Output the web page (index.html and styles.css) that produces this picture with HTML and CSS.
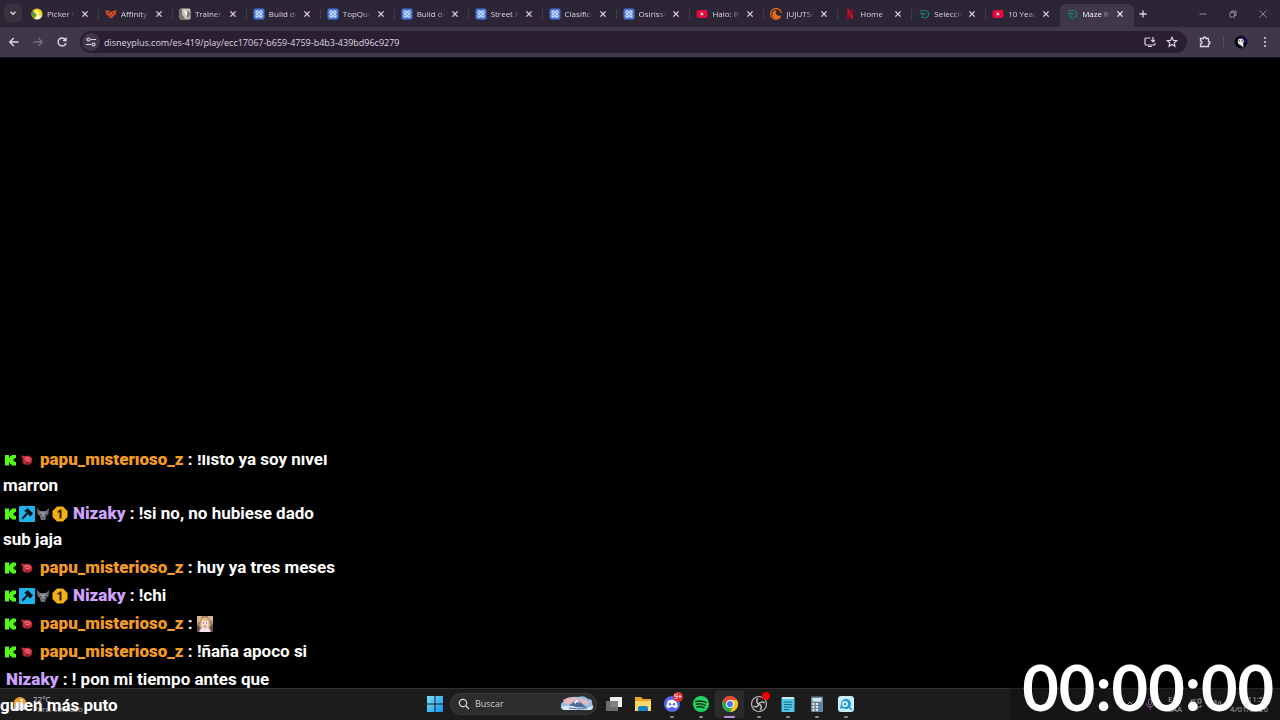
FILE: index.html
```html
<!DOCTYPE html>
<html lang="es">
<head>
  <meta charset="UTF-8">
  <meta name="viewport" content="width=device-width, initial-scale=1.0">
  <title>Maze Runner</title>
  <link rel="stylesheet" href="styles.css">
</head>
<body>
  <!-- shared icons -->
  <svg class="sprite" aria-hidden="true">
    <symbol id="close" viewBox="0 0 12 12"><path d="M3.4 3.4l5.2 5.2M8.600 3.400L3.400 8.600" fill="none" stroke="currentColor" stroke-width="1.3"/></symbol>
    <symbol id="build" viewBox="0 0 12 12"><rect x=".5" y=".5" width="11" height="11" rx="2" fill="#4a76dc"/><g fill="none" stroke="#cfe2ff" stroke-width="1.1"><circle cx="4.2" cy="4.2" r="1.3"/><circle cx="7.8" cy="4.2" r="1.3"/><circle cx="4.2" cy="7.8" r="1.3"/><circle cx="7.8" cy="7.8" r="1.3"/></g></symbol>
    <symbol id="youtube" viewBox="0 0 12 12"><rect x=".5" y="2" width="11" height="8" rx="2" fill="#e8083e"/><path d="M4.8 4.2L8 6 4.8 7.8z" fill="#fff"/></symbol>
    <symbol id="disney" viewBox="0 0 12 12"><path d="M2 3.2c4-2.2 9-.2 8.800 3.300C10.600 9.500 6.500 10.600 3.200 9M1.500 6c2-1 5-.8 6.500.8M4.500 4.500v5" fill="none" stroke="#1d7a78" stroke-width="1.200"/></symbol>
    <symbol id="kick" viewBox="0 0 14 14"><path d="M2 1.500h4v3h1V3h1.500V1.500H13V5h-1.500v1.500H10v1h1.500V9H13v3.500H8.500V11H7V9.500H6v3H2z" fill="#53fc18"/></symbol>
    <symbol id="hammer" viewBox="0 0 16 16"><rect width="16" height="16" rx="1" fill="#1cb4ee"/><path d="M5 5l4-3 1 1.500L12.500 6 14 7l-2.500 3.500L10 9.500 9 8l-5 5.500L2.500 12l5-5.500L6.500 5.500z" fill="#08131b"/></symbol>
    <symbol id="wolf" viewBox="0 0 14 14"><path d="M1 1l3 3h6l3-3-.5 6-2 1.500L9 13H5L3.500 8.500l-2-1.500z" fill="#68717d"/><path d="M4 4l3 2 3-2-1 4-2 4-2-4z" fill="#9a9ba4"/><path d="M4 7l2 .5L5 8.500zM10 7l-2 .5 1 1z" fill="#191417"/><path d="M6 9.500h2l-1 2z" fill="#5a2d30"/></symbol>
    <symbol id="first" viewBox="0 0 16 16"><path d="M5 .5h6L15.500 5v6L11 15.500H5L.5 11V5z" fill="#f3ae18"/><path d="M5.500 5.500L8 3.500h1.500v9h-2V6l-2 1z" fill="#33200a"/></symbol>
    <symbol id="meat" viewBox="0 0 14 14"><path d="M1 2.500l4 .5c4-1 7.500 1 7.300 4.500-.2 3.500-3.800 5-6.800 4C2.500 11 2 8.500 3 6.500z" fill="#c72c3b"/><path d="M4.500 6c2-2 5-1 6 .5M6 7.500c1.500-.8 3 0 3.500 1" fill="none" stroke="#f0a1a5" stroke-width="1"/><path d="M5.500 10h4" stroke="#691622"/></symbol>
  </svg>

  <header class="browser">
    <div class="tabbar">
      <button class="tab-search" aria-label="Buscar pestañas"><svg viewBox="0 0 12 12"><path d="M3.500 4.800L6 7.300l2.500-2.500" fill="none" stroke="currentColor" stroke-width="1.400"/></svg></button>
      <nav class="tabs">
        <div class="tab"><svg viewBox="0 0 12 12"><circle cx="6" cy="6" r="5.500" fill="#edd51c"/><path d="M6 6L1.500 2.500A5.500 5.500 0 0 0 3 10.700z" fill="#5c9a36"/><path d="M6 6l5 2A5.500 5.500 0 0 1 4 11z" fill="#f2efc2"/><path d="M3 4l3-2 3 3-3 2z" fill="#fff28c"/></svg><a href="#">Picker Wheel</a><button aria-label="Cerrar"><svg><use href="#close"/></svg></button></div>
        <div class="tab"><svg viewBox="0 0 12 12"><path d="M.5 2l3 .7L6 4l2.500-1.300 3-.7-.8 4.500L8.500 8 7.500 10h-3l-1-2-2.200-1.500z" fill="#d14e20"/><path d="M3 4.500l2 1.300M9 4.500L7 5.800M5 8.500l1-1 1 1" stroke="#562018" fill="none"/></svg><a href="#">Affinity</a><button aria-label="Cerrar"><svg><use href="#close"/></svg></button></div>
        <div class="tab"><svg viewBox="0 0 12 12"><rect x=".5" y=".5" width="11" height="11" rx="1.500" fill="#c9c6bc"/><path d="M1 1h2v5l3 5H1zM9 2l2 4-2 5-1-4z" fill="#77716b"/><path d="M5 2l3 2v4L6 6z" fill="#f5f2e9"/></svg><a href="#">Trainer</a><button aria-label="Cerrar"><svg><use href="#close"/></svg></button></div>
        <div class="tab"><svg><use href="#build"/></svg><a href="#">Build de</a><button aria-label="Cerrar"><svg><use href="#close"/></svg></button></div>
        <div class="tab"><svg><use href="#build"/></svg><a href="#">TopQues</a><button aria-label="Cerrar"><svg><use href="#close"/></svg></button></div>
        <div class="tab"><svg><use href="#build"/></svg><a href="#">Build de</a><button aria-label="Cerrar"><svg><use href="#close"/></svg></button></div>
        <div class="tab"><svg><use href="#build"/></svg><a href="#">Street F</a><button aria-label="Cerrar"><svg><use href="#close"/></svg></button></div>
        <div class="tab"><svg><use href="#build"/></svg><a href="#">Clasificac</a><button aria-label="Cerrar"><svg><use href="#close"/></svg></button></div>
        <div class="tab"><svg><use href="#build"/></svg><a href="#">Osiriss#</a><button aria-label="Cerrar"><svg><use href="#close"/></svg></button></div>
        <div class="tab"><svg><use href="#youtube"/></svg><a href="#">Halo: Re</a><button aria-label="Cerrar"><svg><use href="#close"/></svg></button></div>
        <div class="tab"><svg viewBox="0 0 12 12"><path d="M10.800 8.500A5.400 5.400 0 1 1 11.400 5" fill="none" stroke="#f16a18" stroke-width="1.200"/><path d="M10.800 7A4.300 4.300 0 1 1 7 2.200 2.200 2.200 0 1 0 10.800 7z" fill="#f16a18"/></svg><a href="#">JUJUTSU</a><button aria-label="Cerrar"><svg><use href="#close"/></svg></button></div>
        <div class="tab"><svg viewBox="0 0 12 12"><path d="M3 1h2v10H3zM7 1h2v10H7z" fill="#9b0b20"/><path d="M3 1h2l4 10H7z" fill="#d30d26"/></svg><a href="#">Home</a><button aria-label="Cerrar"><svg><use href="#close"/></svg></button></div>
        <div class="tab"><svg><use href="#disney"/></svg><a href="#">Seleccio</a><button aria-label="Cerrar"><svg><use href="#close"/></svg></button></div>
        <div class="tab"><svg><use href="#youtube"/></svg><a href="#">10 Years</a><button aria-label="Cerrar"><svg><use href="#close"/></svg></button></div>
        <div class="tab active"><svg><use href="#disney"/></svg><a href="#">Maze Ru</a><button aria-label="Cerrar"><svg><use href="#close"/></svg></button></div>
      </nav>
      <button class="new-tab" aria-label="Nueva pestaña"><svg viewBox="0 0 12 12"><path d="M6 2.500v7M2.500 6h7" stroke="currentColor" stroke-width="1.300"/></svg></button>
      <div class="window-buttons">
        <button aria-label="Minimizar"><svg viewBox="0 0 12 12"><path d="M2.500 6h7" stroke="currentColor"/></svg></button>
        <button aria-label="Restaurar"><svg viewBox="0 0 12 12"><path d="M3 4.500h4.500V9H3zM4.500 4.500V3H9v4.500H7.500" fill="none" stroke="currentColor"/></svg></button>
        <button aria-label="Cerrar ventana"><svg viewBox="0 0 12 12"><path d="M2.500 2.500l7 7M9.500 2.500l-7 7" stroke="currentColor"/></svg></button>
      </div>
    </div>
    <div class="toolbar">
      <button aria-label="Atrás"><svg viewBox="0 0 12 12"><path d="M10.500 6H2M5.800 2L1.800 6l4 4" fill="none" stroke="currentColor" stroke-width="1.300"/></svg></button>
      <button aria-label="Adelante" disabled><svg viewBox="0 0 12 12"><path d="M1.500 6H10M6.200 2l4 4-4 4" fill="none" stroke="currentColor" stroke-width="1.300"/></svg></button>
      <button aria-label="Recargar"><svg viewBox="0 0 12 12"><path d="M9.500 3.800A4 4 0 1 0 10 7M10 1.500v3H7" fill="none" stroke="currentColor" stroke-width="1.400"/></svg></button>
      <div class="address">
        <button class="site-info" aria-label="Información del sitio"><svg viewBox="0 0 12 12"><g fill="none" stroke="currentColor" stroke-width="1.200"><circle cx="3.500" cy="3.500" r="1.500"/><circle cx="8.500" cy="8.500" r="1.500"/><path d="M6 3.500h5M1 8.500h5"/></g></svg></button>
        <input type="text" aria-label="Dirección" value="disneyplus.com/es-419/play/ecc17067-b659-4759-b4b3-439bd96c9279">
        <button aria-label="Instalar"><svg viewBox="0 0 12 12"><path d="M6.500 2H2Q1 2 1 3v5q0 1 1 1h8q1 0 1-1V7M4 10.500h4M9 1v4.500M7.200 4L9 5.800 10.800 4" fill="none" stroke="currentColor" stroke-width="1.200"/></svg></button>
        <button aria-label="Favorito"><svg viewBox="0 0 12 12"><path d="M6 1.300l1.400 3.100 3.400.3-2.600 2.200.8 3.400-3-1.800-3 1.800.8-3.400-2.600-2.200 3.400-.3z" fill="none" stroke="currentColor" stroke-width="1.100"/></svg></button>
      </div>
      <button class="extensions" aria-label="Extensiones"><svg viewBox="0 0 12 12"><path d="M1.500 2.500h3q0-1.500 1.200-1.500T7 2.500h2.500v3Q11 5.500 11 6.700T9.500 8v2.500h-8V8Q3 8 3 6.500T1.500 5z" fill="none" stroke="currentColor" stroke-width="1.300"/></svg></button>
      <button class="profile" aria-label="Perfil"><svg viewBox="0 0 14 14"><circle cx="7" cy="7" r="6.500" fill="#080719"/><path d="M8 1.500a6 6 0 0 1 5 7l-3-2z" fill="#1b1468"/><path d="M3.500 6.500L4.500 4l3.500-.5L10 6l-.8 2.500.3 4-2.500-2-2.500-1.500z" fill="#eee8ea"/><path d="M4.500 6h1.500M7.500 6H9" stroke="#222"/></svg></button>
      <button aria-label="Menú"><svg viewBox="0 0 12 12"><g fill="currentColor"><circle cx="6" cy="2" r="1"/><circle cx="6" cy="6" r="1"/><circle cx="6" cy="10" r="1"/></g></svg></button>
    </div>
  </header>

  <main class="video"></main>

  <footer class="taskbar">
    <div class="weather">
      <svg viewBox="0 0 16 16"><circle cx="8" cy="7.500" r="6.500" fill="#ee9a28"/><path d="M3 14a3 3 0 0 1 0-5 4 4 0 0 1 7-1 3.200 3.200 0 0 1 3 6z" fill="#aeb7c4"/></svg>
      <div>22°C<br><span>Parc. soleado</span></div>
    </div>
    <div class="apps">
      <button class="app" aria-label="Inicio"><svg viewBox="0 0 18 18"><defs><linearGradient id="win" x2="1" y2="1"><stop stop-color="#78e1fb"/><stop offset="1" stop-color="#1594e6"/></linearGradient></defs><path d="M1 1h7.500v7.500H1zM9.500 1H17v7.500H9.500zM1 9.500h7.500V17H1zM9.500 9.500H17V17H9.500z" fill="url(#win)"/></svg></button>
      <label class="search">
        <svg viewBox="0 0 12 12"><path d="M8 8l3 3" stroke="#ddd" stroke-width="1.300"/><circle cx="5" cy="5" r="3.700" fill="none" stroke="#ddd" stroke-width="1.200"/></svg>
        <input type="text" placeholder="Buscar" aria-label="Buscar">
        <svg class="scene" viewBox="0 0 34 16"><path d="M4 14Q0 13 1 9q0-3 4-4 1-4 6-3 3-2 7-1 7-2 10 2 5 0 4 5 3 4-1 6z" fill="#94bce0"/><path d="M3 4q8-5 14-2l7 1 6 3-3 3-22-1z" fill="#e4b8c1"/><path d="M7 11l10-8 9 8z" fill="#506b9b"/><path d="M14 6l3-3 3 4-3-1-2 2z" fill="#f1f3fa"/><path d="M1 11q8-3 15 0t17-1l-2 4H4z" fill="#d9e7f5"/><path d="M9 12l11 1 7-1" stroke="#496d9c" fill="none"/></svg>
      </label>
      <button class="app" aria-label="Vista de tareas"><svg viewBox="0 0 18 18"><path d="M5 2h12v10H5z" fill="#eee"/><path d="M1 6h12v10H1z" fill="#777" opacity=".9"/></svg></button>
      <button class="app" aria-label="Explorador"><svg viewBox="0 0 18 18"><path d="M1 2h6l2 2h8v12H1z" fill="#e8a91f"/><path d="M1 6h16v10H1z" fill="#ffd764"/><path d="M4 16v-3q0-2 2-2h6q2 0 2 2v3z" fill="#1983c7"/></svg></button>
      <button class="app open" aria-label="Discord"><svg viewBox="0 0 18 18"><circle cx="9" cy="9" r="8" fill="#5865f2"/><path d="M5 5.500q4-1.500 8 0 1.500 3 1.500 6.500l-3 1.200-.8-1.200H7.300l-.8 1.200-3-1.200Q3.500 8.500 5 5.500z" fill="#fff"/><circle cx="7" cy="9.300" r="1.200" fill="#5865f2"/><circle cx="11" cy="9.300" r="1.200" fill="#5865f2"/></svg><span class="count">9+</span></button>
      <button class="app open" aria-label="Spotify"><svg viewBox="0 0 18 18"><circle cx="9" cy="9" r="8" fill="#1ed760"/><path d="M4 6.500q5-1.500 10 1M4.500 9.300q4.500-1.300 8.500 1M5 12q4-1 7 .8" fill="none" stroke="#10251a" stroke-width="1.500" stroke-linecap="round"/></svg></button>
      <button class="app open current" aria-label="Chrome"><svg viewBox="0 0 18 18"><circle cx="9" cy="9" r="8" fill="#31a952"/><path d="M9 5h6.930A8 8 0 0 1 9 17l3.500-6z" fill="#fbc116"/><path d="M2.070 5A8 8 0 0 1 15.930 5H9L5.500 11z" fill="#e94335"/><circle cx="9" cy="9" r="4" fill="#fff"/><circle cx="9" cy="9" r="3.100" fill="#3f7de8"/></svg></button>
      <button class="app open" aria-label="OBS"><svg viewBox="0 0 18 18"><circle cx="9" cy="9" r="7.500" fill="#202023" stroke="#bbb" stroke-width="1.200"/><path d="M8 3a3.500 3.500 0 0 0 1 6 3.500 3.500 0 0 1-5.500 2M9 9a3.500 3.500 0 0 1 5.500-1M9 9a3.500 3.500 0 0 1 1 6" fill="none" stroke="#bbb" stroke-width="1.500"/></svg><span class="recording"></span></button>
      <button class="app open" aria-label="Bloc de notas"><svg viewBox="0 0 18 18"><rect x="2.500" y="2" width="13" height="15" rx="1" fill="#54c6e5"/><path d="M3 2h12v2H3z" fill="#c9edf4"/><path d="M5 7h8M5 9.500h8M5 12h8M5 14.500h5" stroke="#176a89"/></svg></button>
      <button class="app open" aria-label="Calculadora"><svg viewBox="0 0 18 18"><rect x="3" y="1.500" width="12" height="15.500" rx="1" fill="#79858e"/><path d="M4.500 3h9v3.500h-9z" fill="#c5edf7"/><path d="M4.500 8h2v2h-2zM8 8h2v2H8zM4.500 11h2v2h-2zM8 11h2v2H8zM4.500 14h2v2h-2zM8 14h2v2H8z" fill="#e0e5e9"/><path d="M11.500 8h2v8h-2z" fill="#2a8fd0"/></svg></button>
      <button class="app open" aria-label="Chat"><svg viewBox="0 0 18 18"><rect x="1" y="1" width="16" height="16" rx="3" fill="#c9effb"/><path d="M4 9a5 5 0 1 1 10 0 5 5 0 0 1-8 4l-3 1z" fill="#2697d5"/><circle cx="8" cy="9" r="3" fill="#d4f4fc"/><circle cx="8" cy="9" r="1.300" fill="#2697d5"/><path d="M12 12l3 3" stroke="#2697d5" stroke-width="1.500"/></svg></button>
    </div>
    <div class="tray">
      <svg viewBox="0 0 12 12"><path d="M3 7l3-3 3 3"/></svg>
      <svg class="mic" viewBox="0 0 12 12"><path d="M4.500 2.500Q4.500 1 6 1t1.500 1.500v3Q7.500 7 6 7T4.500 5.500zM2.500 5.500Q2.500 9 6 9t3.500-3.500M6 9v2.500"/></svg>
      <span class="lang">ESP<br>LAA</span>
      <svg viewBox="0 0 12 12"><path d="M6 2H1v7h10V7M4 11h4M8 1h3v4H8z"/></svg>
      <svg viewBox="0 0 12 12"><path d="M1 4.500h2L6 2v8L3 7.500H1zM8 4q2 2 0 4M9.500 2.500q3 3.500 0 7"/></svg>
      <span class="clock">11:53<br>4/01/2026</span>
    </div>
  </footer>

  <section class="chat">
    <p><svg class="kick"><use href="#kick"/></svg><svg class="meat"><use href="#meat"/></svg><b class="papu">papu_misterioso_z</b> : !listo ya soy nivel marron</p>
    <p><svg class="kick"><use href="#kick"/></svg><svg class="hammer"><use href="#hammer"/></svg><svg class="wolf"><use href="#wolf"/></svg><svg class="first"><use href="#first"/></svg><b class="nizaky">Nizaky</b> : !si no, no hubiese dado sub jaja</p>
    <p><svg class="kick"><use href="#kick"/></svg><svg class="meat"><use href="#meat"/></svg><b class="papu">papu_misterioso_z</b> : huy ya tres meses</p>
    <p><svg class="kick"><use href="#kick"/></svg><svg class="hammer"><use href="#hammer"/></svg><svg class="wolf"><use href="#wolf"/></svg><svg class="first"><use href="#first"/></svg><b class="nizaky">Nizaky</b> : !chi</p>
    <p><svg class="kick"><use href="#kick"/></svg><svg class="meat"><use href="#meat"/></svg><b class="papu">papu_misterioso_z</b> : <svg class="emote" viewBox="0 0 16 16"><path d="M0 0h16v16H0z" fill="#a8826e"/><path d="M0 0h5l-2 5-3 2zM11 0h5v6l-4-3z" fill="#d7ba8b"/><path d="M4 4q4-5 8 0l1 6-5 4-5-4z" fill="#e8c18c"/><path d="M5 5h6v5l-3 2-3-2z" fill="#f8ded5"/><path d="M2 16l3-5 3 2 3-2 3 5z" fill="#f3e3eb"/><path d="M0 9l3 2-1 5H0zM16 8l-3 3 1 5h2z" fill="#6b4a4c"/><path d="M6 7h1M9 7h1M7 10h2" stroke="#8c3f4b"/></svg></p>
    <p><svg class="kick"><use href="#kick"/></svg><svg class="meat"><use href="#meat"/></svg><b class="papu">papu_misterioso_z</b> : !ñaña apoco si</p>
    <p class="entering"><b class="nizaky">Nizaky</b> : ! pon mi tiempo antes que</p>
    <p class="overflow">guien más puto</p>
  </section>

  <div class="timer">00:00:00</div>
</body>
</html>
```

FILE: styles.css
```css
* {
  box-sizing: border-box;
}
body {
  margin: 0;
  min-height: 100vh;
  display: flex;
  flex-direction: column;
  position: relative;
  overflow: hidden;
  background: #000;
  color: #ddd6e2;
  font-family: "Open Sans", "Noto Sans", sans-serif;
  font-size: 8px;
}
button {
  display: flex;
  align-items: center;
  justify-content: center;
  padding: 0;
  border: none;
  background: none;
  color: inherit;
  font: inherit;
}
input {
  min-width: 0;
  padding: 0;
  border: none;
  outline: none;
  background: none;
  color: inherit;
  font: inherit;
}
a {
  color: inherit;
  text-decoration: none;
}
svg {
  flex: none;
  width: 12px;
  height: 12px;
}
.sprite {
  position: absolute;
  width: 0;
  height: 0;
}

/* browser */
.browser {
  background: #2c2535;
  border-bottom: 1px solid #19151d;
}
.tabbar {
  display: flex;
  height: 27px;
  padding-right: 2px;
}
.tab-search {
  width: 18px;
  height: 18px;
  margin: 4px 3px 0 4px;
  border-radius: 5px;
  background: #39323f;
}
.tabs {
  display: flex;
  flex: 1;
  min-width: 0;
}
.tab {
  flex: 1 1 0;
  min-width: 0;
  display: flex;
  align-items: center;
  gap: 4px;
  padding: 0 8px 0 6px;
  position: relative;
}
.tab::after {
  content: "";
  position: absolute;
  right: 0;
  top: 9px;
  width: 1px;
  height: 10px;
  background: #443b4b;
}
.tab a {
  flex: 1;
  overflow: hidden;
  white-space: nowrap;
  mask-image: linear-gradient(90deg, #000 70%, transparent);
}
.tab.active {
  margin-top: 4px;
  padding-bottom: 4px;
  border-radius: 6px 6px 0 0;
  background: #403848;
  color: #f4eff7;
}
.tab.active::after,
.tab:nth-last-child(2)::after {
  display: none;
}
.new-tab {
  flex: none;
  width: 18px;
}
.window-buttons {
  flex: none;
  display: flex;
  margin-left: 36px;
  color: #8f8795;
}
.window-buttons button {
  width: 30px;
}
.toolbar {
  display: flex;
  align-items: center;
  height: 30px;
  padding: 0 3px 0 2px;
  background: #403848;
}
.toolbar > button {
  flex: none;
  width: 24px;
  height: 24px;
}
.toolbar button:disabled {
  color: #79707f;
}
.address {
  flex: 1;
  display: flex;
  align-items: center;
  height: 22px;
  margin-left: 6px;
  padding: 0 4px 0 2px;
  border-radius: 11px;
  background: #291f30;
}
.address input {
  flex: 1;
  margin-left: 4px;
  font-size: 9px;
}
.address button {
  width: 22px;
  height: 18px;
}
.address .site-info {
  width: 18px;
  border-radius: 9px;
  background: #403848;
}
.toolbar .extensions {
  margin: 0 6px;
}
.toolbar .profile {
  width: 30px;
  height: 12px;
  padding-left: 5px;
  border-left: 1px solid #564d5e;
}
.profile svg {
  width: 14px;
  height: 14px;
}

.video {
  flex: 1;
}

/* taskbar */
.taskbar {
  display: grid;
  grid-template-columns: 1fr auto 1fr;
  height: 32px;
  padding-bottom: 2px;
  border-top: 1px solid #303030;
  background: #1c1c1c;
}
.weather {
  display: flex;
  align-items: center;
  gap: 5px;
  padding-left: 12px;
  line-height: 10px;
}
.weather svg {
  width: 16px;
  height: 16px;
}
.weather span {
  color: #aaa;
}
.apps {
  display: flex;
  align-items: center;
}
.app {
  position: relative;
  width: 29px;
  height: 28px;
}
.app svg {
  width: 18px;
  height: 18px;
}
.app.open::after {
  content: "";
  position: absolute;
  bottom: 0;
  width: 4px;
  height: 2px;
  border-radius: 1px;
  background: #8b8b8b;
}
.app.current {
  border-radius: 3px;
  background: #2a2a2a;
}
.app.current::after {
  width: 11px;
  background: #bd8bd4;
}
.count,
.recording {
  position: absolute;
  top: 2px;
  right: 3px;
  width: 10px;
  height: 10px;
  border-radius: 5px;
  background: #d9343e;
  color: #fff;
  font-size: 7px;
  line-height: 10px;
}
.recording {
  width: 8px;
  height: 8px;
  background: #f00000;
}
.search {
  display: flex;
  align-items: center;
  gap: 5px;
  width: 147px;
  height: 22px;
  margin: 0 2px 0 1px;
  padding: 0 2px 0 7px;
  border: 1px solid #393939;
  border-radius: 11px;
  background: #2d2d2d;
}
.search input {
  flex: 1;
  font-size: 9px;
}
.search input::placeholder {
  color: #ccc;
}
.search .scene {
  width: 34px;
  height: 16px;
}
.tray {
  display: flex;
  align-items: center;
  justify-content: flex-end;
  gap: 8px;
  padding-right: 12px;
  line-height: 10px;
  color: #ddd;
}
.tray svg {
  fill: none;
  stroke: #ccc;
}
.tray .mic {
  margin-right: 4px;
  stroke: #aa7bb8;
}
.lang {
  text-align: center;
}
.clock {
  width: 38px;
  text-align: right;
}

/* stream overlays */
.chat {
  position: absolute;
  left: 0;
  bottom: 0;
  width: 340px;
  height: 265px;
  padding: 0 3px 2px;
  display: flex;
  flex-direction: column;
  justify-content: flex-end;
  gap: 2px;
  overflow: hidden;
  color: #fff;
  font: 700 17px/26px Roboto, sans-serif;
}
.chat p {
  margin: 0;
}
.chat svg {
  width: 14px;
  height: 14px;
  vertical-align: -2px;
}
.chat .hammer,
.chat .first,
.chat .emote {
  width: 16px;
  height: 16px;
  vertical-align: -3px;
}
.chat .hammer {
  margin: 0 1px 0 2px;
}
.chat .meat {
  margin: 0 6px 0 3px;
}
.chat .first {
  margin: 0 5px 0 2px;
}
.papu {
  color: #f39b22;
}
.nizaky {
  color: #cda3ff;
}
.chat .entering {
  padding-left: 3px;
}
.chat .overflow {
  margin: -2px -3px 0;
}
.timer {
  position: absolute;
  right: 0;
  bottom: 0;
  padding: 0 6px 0 12px;
  background: rgba(0, 0, 0, 0.25);
  color: #fff;
  font: 700 63px/66px Lato, sans-serif;
}
```
